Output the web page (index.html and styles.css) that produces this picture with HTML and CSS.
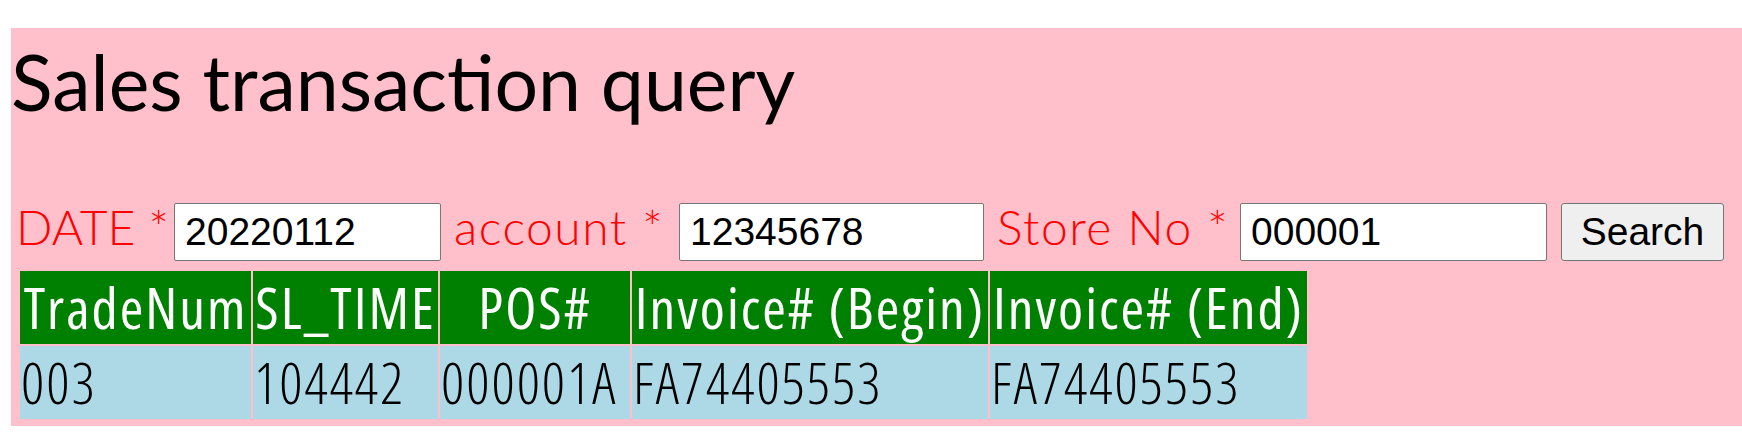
FILE: index.html
```html
<!DOCTYPE html>
<html lang="en">
<head>
<meta charset="utf-8">
<title>Sales transaction query</title>
<link rel="stylesheet" href="styles.css">
</head>
<body>
<div class="page">
  <h1 class="title">Sales transaction query</h1>
  <form class="query">
    <label class="lbl lbl-date" for="date">DATE *</label>
    <input class="field field-date" id="date" type="text" value="20220112">
    <label class="lbl lbl-acct" for="acct">account *</label>
    <input class="field field-wide" id="acct" type="text" value="12345678">
    <label class="lbl lbl-store" for="store">Store No *</label>
    <input class="field field-wide2" id="store" type="text" value="000001">
    <button class="btn" type="button">Search</button>
  </form>
  <table class="result">
    <thead>
      <tr>
        <th class="c1">TradeNum</th>
        <th class="c2">SL_TIME</th>
        <th class="c3">POS#</th>
        <th class="c4">Invoice# (Begin)</th>
        <th class="c5">Invoice# (End)</th>
      </tr>
    </thead>
    <tbody>
      <tr>
        <td>003</td>
        <td>104442</td>
        <td>000001A</td>
        <td>FA74405553</td>
        <td>FA74405553</td>
      </tr>
    </tbody>
  </table>
</div>
</body>
</html>
```
FILE: styles.css
```css
html, body {
  margin: 0;
  padding: 0;
  background: #ffffff;
}
body {
  font-family: "Lato", "Open Sans", sans-serif;
}
.page {
  display: flow-root;
  background: #ffc0cb;
  margin: 28px 0 0 11px;
  padding: 7px 0 5px 0;
}
.title {
  margin: 0;
  font-size: 77px;
  font-weight: 400;
  line-height: 92px;
  color: #000;
}
.query {
  display: flex;
  align-items: baseline;
  gap: 13px;
  margin: 76px 0 0 5px;
  height: 58px;
}
.lbl {
  color: #ff0000;
  font-size: 48px;
  font-weight: 300;
  line-height: 1;
  white-space: nowrap;
}
.lbl-date { width: 145px; }
.lbl-acct { width: 212px; letter-spacing: 1.5px; }
.lbl-store { width: 230px; letter-spacing: 1.5px; }
.field {
  box-sizing: border-box;
  height: 58px;
  padding: 0 10px;
  border: 1px solid #767676;
  border-radius: 2px;
  background: #fff;
  font-family: "Liberation Sans", Arial, sans-serif;
  font-size: 39px;
  color: #000;
}
.field-date { width: 267px; }
.field-wide { width: 305px; }
.field-wide2 { width: 307px; }
.btn {
  box-sizing: border-box;
  width: 163px;
  height: 58px;
  margin-left: 1px;
  border: 1px solid #767676;
  border-radius: 3px;
  background: #efefef;
  font-family: "Liberation Sans", Arial, sans-serif;
  font-size: 39px;
  color: #000;
  padding: 0;
}
.result {
  border-spacing: 2px;
  margin: 8px 0 0 7px;
  font-family: "Open Sans", "Lato", sans-serif;
  font-size: 57px;
  font-stretch: 75%;
}
.result th,
.result td {
  padding: 1px;
  line-height: 71px;
  white-space: nowrap;
}
.result th {
  background: #008000;
  color: #fff;
  font-weight: 400;
  letter-spacing: 2px;
}
.result td {
  background: #add8e6;
  color: #000;
  font-weight: 300;
  letter-spacing: 2px;
  text-align: left;
}
.c1 { width: 229px; }
.c2 { width: 183px; }
.c3 { width: 188px; }
.c4 { width: 354px; }
.c5 { width: 315px; }
```
